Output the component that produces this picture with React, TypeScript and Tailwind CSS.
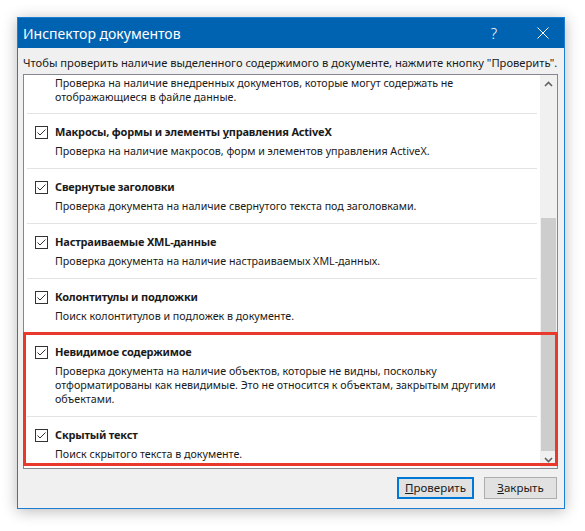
import type { ReactNode } from 'react';

// Диалог "Инспектор документов" (Word, Windows 10)

const items: { title: ReactNode; lines: string[] }[] = [
  {
    title: (
      <>
        Макросы, формы и элементы <span className="underline">у</span>правления ActiveX
      </>
    ),
    lines: ['Проверка на наличие макросов, форм и элементов управления ActiveX.'],
  },
  {
    title: 'Свернутые заголовки',
    lines: ['Проверка документа на наличие свернутого текста под заголовками.'],
  },
  {
    title: 'Настраиваемые XML-данные',
    lines: ['Проверка документа на наличие настраиваемых XML-данных.'],
  },
  {
    title: 'Колонтитулы и подложки',
    lines: ['Поиск колонтитулов и подложек в документе.'],
  },
  {
    title: 'Невидимое содержимое',
    lines: [
      'Проверка документа на наличие объектов, которые не видны, поскольку',
      'отформатированы как невидимые. Это не относится к объектам, закрытым другими',
      'объектами.',
    ],
  },
  {
    title: 'Скрытый текст',
    lines: ['Поиск скрытого текста в документе.'],
  },
];

function CheckBox() {
  return (
    <span className="flex h-[13px] w-[13px] shrink-0 items-center justify-center border border-[#333333] bg-white">
      <svg viewBox="0 0 11 11" className="h-[11px] w-[11px]" fill="none" stroke="#333333" strokeWidth="1">
        <path d="M1.5 5.5 L4 8 L9.5 2.5" />
      </svg>
    </span>
  );
}

function Lines({ lines }: { lines: string[] }) {
  return (
    <div className="pl-[28px] text-[10.7px] leading-[14px] text-[#1a1a1a]">
      {lines.map((l) => (
        <div key={l}>{l}</div>
      ))}
    </div>
  );
}

function Item({ title, lines }: { title: ReactNode; lines: string[] }) {
  return (
    <div className="mx-[3px] border-b border-[#e3e3e3] pt-[10px] pb-[10px]">
      <div className="mb-[3px] flex h-[17px] items-center pl-[8px]">
        <CheckBox />
        <span className="ml-[7px] text-[11px] font-bold tracking-[-0.2px] text-[#1a1a1a]">{title}</span>
      </div>
      <Lines lines={lines} />
    </div>
  );
}

function Chevron({ up }: { up?: boolean }) {
  return (
    <svg viewBox="0 0 9 6" className="h-[6px] w-[9px]" fill="none" stroke="#606060" strokeWidth="1.6">
      <path d={up ? 'M1 5 L4.5 1.5 L8 5' : 'M1 1 L4.5 4.5 L8 1'} />
    </svg>
  );
}

function ScrollBar() {
  return (
    <div className="flex w-[17px] shrink-0 flex-col bg-[#f0f0f0]">
      <div className="flex h-[17px] items-center justify-center">
        <Chevron up />
      </div>
      <div className="flex flex-1 flex-col pt-[126px] px-[1px]">
        <div className="flex-1 bg-[#cdcdcd]" />
      </div>
      <div className="flex h-[17px] items-center justify-center">
        <Chevron />
      </div>
    </div>
  );
}

function Button({ children, primary }: { children: ReactNode; primary?: boolean }) {
  return (
    <button
      className={
        primary
          ? 'flex h-[22px] w-[77px] items-center justify-center border-2 border-[#0078d7] bg-[#e1e1e1] text-[11.5px] text-[#1a1a1a]'
          : 'flex h-[22px] w-[73px] items-center justify-center border border-[#adadad] bg-[#e1e1e1] text-[11.5px] text-[#1a1a1a]'
      }
    >
      {children}
    </button>
  );
}

export default function App() {
  return (
    <div className="min-h-screen bg-white pt-[17px] pl-[17px] font-['Noto_Sans',sans-serif]">
      <div className="flex h-[492px] w-[548px] flex-col border border-[#1a7fd4] bg-[#f0f0f0] shadow-[0_2px_14px_rgba(0,0,0,0.28)]">
        {/* Title bar */}
        <div className="flex h-[30px] shrink-0 items-center bg-[#0063b1] pl-[5px] text-white">
          <span className="text-[14px]">Инспектор документов</span>
          <span className="ml-auto mr-[40px] text-[15px] font-light">?</span>
          <svg viewBox="0 0 12 12" className="mr-[15px] h-[12px] w-[12px]" stroke="white" strokeWidth="1">
            <path d="M0.5 0.5 L11.5 11.5 M11.5 0.5 L0.5 11.5" />
          </svg>
        </div>

        <div className="mt-[7px] pl-[5px] pr-[2px] text-[11.2px] leading-[16px] text-[#1a1a1a]">
          Чтобы проверить наличие выделенного содержимого в документе, нажмите кнопку "Проверить".
        </div>

        {/* List, scrolled so the first item shows only its description */}
        <div className="relative mt-[3px] ml-[5px] flex h-[395px] w-[535px] border border-[#828790] bg-white">
          <div className="flex-1 overflow-hidden">
            <div className="mx-[3px] border-b border-[#e3e3e3] pt-[1px] pb-[9px]">
              <Lines
                lines={[
                  'Проверка на наличие внедренных документов, которые могут содержать не',
                  'отображающиеся в файле данные.',
                ]}
              />
            </div>
            {items.map((it, i) => (
              <Item key={i} title={it.title} lines={it.lines} />
            ))}
          </div>
          <ScrollBar />
          <div className="pointer-events-none absolute left-[-1px] top-[257px] h-[134px] w-[535px] border-[3px] border-[#e8392c]" />
        </div>

        {/* Buttons */}
        <div className="mt-auto mb-[9px] flex justify-end gap-[10px] pr-[7px]">
          <Button primary>
            <span className="underline">П</span>роверить
          </Button>
          <Button>
            <span className="underline">З</span>акрыть
          </Button>
        </div>
      </div>
    </div>
  );
}
